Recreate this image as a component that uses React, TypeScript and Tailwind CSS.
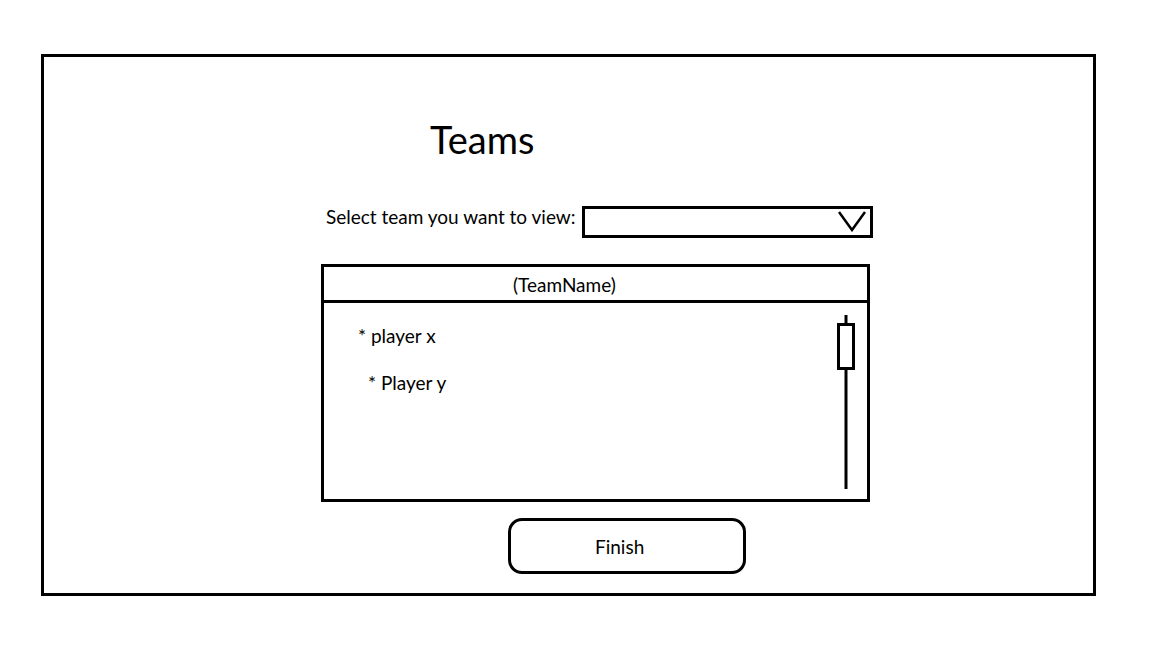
import React from "react";

export default function App() {
  return (
    <div
      className="w-[1152px] h-[648px] bg-white pl-[41px] pt-[54px] text-black"
      style={{ fontFamily: "Lato, 'Open Sans', sans-serif" }}
    >
      <div className="w-[1055px] h-[542px] border-[3px] border-black flex flex-col items-start">
        <h1 className="ml-[386px] mt-[62px] text-[38px] leading-[40px] font-normal">Teams</h1>

        <div className="mt-[45px] ml-[282px] flex items-start">
          <div className="mt-[1px] w-[256px] text-[19px] leading-[24px]">Select team you want to view:</div>
          <div className="mt-[2px] w-[291px] h-[32px] border-[3px] border-black flex justify-end items-start">
            <svg width="28" height="21" viewBox="0 0 28 21" className="mt-[2px] mr-[4px]">
              <polyline points="1,1 14,19 27,1" fill="none" stroke="black" strokeWidth="2.5" />
            </svg>
          </div>
        </div>

        <div className="mt-[26px] ml-[277px] w-[549px] h-[238px] border-[3px] border-black flex flex-col">
          <div className="h-[36px] border-b-[3px] border-black pl-[189px] pt-[1px] text-[19px] leading-[34px]">(TeamName)</div>
          <div className="flex-1 flex">
            <div className="flex-1 flex flex-col items-start text-[19px] leading-[24px]">
              <div className="mt-[21px] ml-[34px]">* player x</div>
              <div className="mt-[23px] ml-[44px]">* Player y</div>
            </div>
            <svg width="20" height="175" viewBox="0 0 20 175" className="mt-[12px] mr-[11px]">
              <line x1="10" y1="0" x2="10" y2="174" stroke="black" strokeWidth="3" />
              <rect x="2.5" y="9.5" width="15" height="44" fill="white" stroke="black" strokeWidth="3" />
            </svg>
          </div>
        </div>

        <div className="mt-[16px] ml-[464px] w-[238px] h-[56px] border-[3px] border-black rounded-[14px] flex items-center pl-[84px] pt-[2px] text-[19px] leading-[24px]">
          Finish
        </div>
      </div>
    </div>
  );
}
